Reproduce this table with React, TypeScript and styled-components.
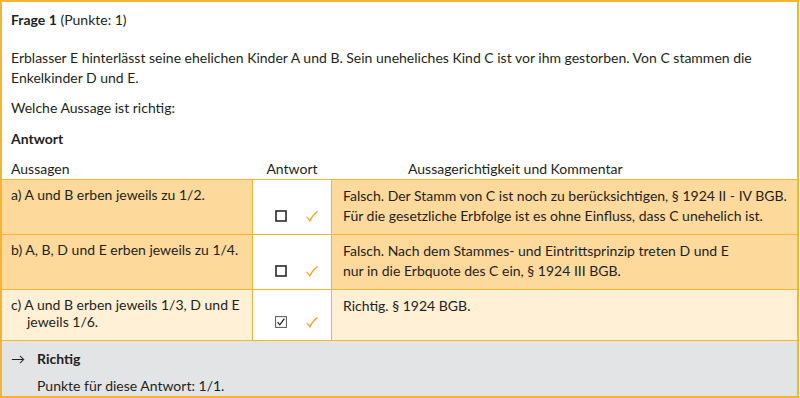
import React from 'react';
import styled, { createGlobalStyle } from 'styled-components';

const GlobalStyle = createGlobalStyle`
    html, body {
        margin: 0;
        padding: 0;
        background: #fff;
    }
    body {
        font-family: Lato, 'Open Sans', 'Liberation Sans', sans-serif;
        color: #231f20;
    }
`;

type Answer = {
    label: string;
    statement: string;
    checked: boolean;
    comment: string[];
    tone: 'strong' | 'light';
};

const answers: Answer[] = [
    {
        label: 'a)',
        statement: 'A und B erben jeweils zu 1/2.',
        checked: false,
        comment: [
            'Falsch. Der Stamm von C ist noch zu berücksichtigen, § 1924 II - IV BGB.',
            'Für die gesetzliche Erbfolge ist es ohne Einfluss, dass C unehelich ist.',
        ],
        tone: 'strong',
    },
    {
        label: 'b)',
        statement: 'A, B, D und E erben jeweils zu 1/4.',
        checked: false,
        comment: [
            'Falsch. Nach dem Stammes- und Eintrittsprinzip treten D und E',
            'nur in die Erbquote des C ein, § 1924 III BGB.',
        ],
        tone: 'strong',
    },
    {
        label: 'c)',
        statement: 'A und B erben jeweils 1/3, D und E jeweils 1/6.',
        checked: true,
        comment: ['Richtig. § 1924 BGB.'],
        tone: 'light',
    },
];

const Box = ({ checked }: { checked: boolean }) =>
    checked ? (
        <svg width="12" height="12" viewBox="0 0 12 12">
            <rect x="0.6" y="0.6" width="10.8" height="10.8" fill="none" stroke="#555" strokeWidth="1" />
            <path d="M2.6 6.2 L4.8 8.8 L9.4 2.6" fill="none" stroke="#222" strokeWidth="1.3" />
        </svg>
    ) : (
        <svg width="12" height="12" viewBox="0 0 12 12">
            <rect x="1" y="1" width="10" height="10" fill="none" stroke="#2a2a2a" strokeWidth="1.6" />
        </svg>
    );

const Tick = () => (
    <svg width="12" height="11" viewBox="0 0 12 11">
        <path d="M1 6.5 Q2.6 7.4 4 9.8 Q6.5 4 11.2 0.8" fill="none" stroke="#f5a623" strokeWidth="1.3" strokeLinecap="round" />
    </svg>
);

const QuestionCard: React.FC = () => (
    <Card>
        <Title>
            <strong>Frage 1</strong> (Punkte: 1)
        </Title>
        <Paragraph>
            Erblasser E hinterlässt seine ehelichen Kinder A und B. Sein uneheliches Kind C ist vor ihm
            gestorben. Von C stammen die Enkelkinder D und E.
        </Paragraph>
        <Question>Welche Aussage ist richtig:</Question>
        <SectionTitle>Antwort</SectionTitle>
        <HeaderRow>
            <HeadCell>Aussagen</HeadCell>
            <HeadCell $center>Antwort</HeadCell>
            <HeadCell $indent={76}>Aussagerichtigkeit und Kommentar</HeadCell>
        </HeaderRow>
        {answers.map((a) => (
            <Row key={a.label} $tone={a.tone}>
                <Statement>
                    {a.label} {a.statement}
                </Statement>
                <ChoiceCell>
                    <Box checked={a.checked} />
                    <Tick />
                </ChoiceCell>
                <Comment>
                    {a.comment.map((line) => (
                        <div key={line}>{line}</div>
                    ))}
                </Comment>
            </Row>
        ))}
        <Result>
            <ResultHead>
                <Arrow>→</Arrow>
                <strong>Richtig</strong>
            </ResultHead>
            <ResultText>Punkte für diese Antwort: 1/1.</ResultText>
        </Result>
    </Card>
);

const Card = styled.div`
    box-sizing: border-box;
    width: 799px;
    height: 398px;
    border: 2px solid #f6b431;
    font-size: 14px;
    display: flex;
    flex-direction: column;
    overflow: hidden;
`;

const Title = styled.div`
    padding: 9px 9px 0;
    line-height: 17px;
    strong {
        font-weight: 700;
    }
`;

const Paragraph = styled.p`
    margin: 20px 0 0;
    padding: 0 9px;
    line-height: 20px;
`;

const Question = styled.p`
    margin: 10px 0 0;
    padding: 0 9px;
    line-height: 20px;
`;

const SectionTitle = styled.div`
    margin-top: 11px;
    padding: 0 9px;
    line-height: 20px;
    font-weight: 700;
`;

const Grid = styled.div`
    display: grid;
    grid-template-columns: 250px 80px 1fr;
`;

const HeaderRow = styled(Grid)`
    margin-top: 10px;
    height: 25px;
    border-bottom: 1px solid #f6b431;
`;

const HeadCell = styled.div<{ $center?: boolean; $indent?: number }>`
    padding-left: ${(p) => (p.$center ? 0 : p.$indent ? `${p.$indent}px` : '9px')};
    text-align: ${(p) => (p.$center ? 'center' : 'left')};
    line-height: 20px;
`;

const Row = styled(Grid)<{ $tone: 'strong' | 'light' }>`
    background: ${(p) => (p.$tone === 'strong' ? '#fdd99c' : '#fff0d6')};
    border-bottom: 1px solid #f6b431;
`;

const Statement = styled.div`
    padding: 6px 0 10px 25px;
    text-indent: -16px;
    line-height: 17px;
`;

const ChoiceCell = styled.div`
    background: #fff;
    border-left: 1px solid #f6b431;
    border-right: 1px solid #f6b431;
    display: flex;
    align-items: flex-end;
    gap: 19px;
    padding: 0 0 12px 22px;
`;

const Comment = styled.div`
    padding: 6px 10px 8px 11px;
    line-height: 20px;
    white-space: nowrap;
`;

const Result = styled.div`
    flex: 1;
    background: #e3e4e6;
    padding: 8px 9px 0;
`;

const ResultHead = styled.div`
    display: flex;
    line-height: 20px;
    strong {
        font-weight: 700;
    }
`;

const Arrow = styled.span`
    width: 26px;
`;

const ResultText = styled.div`
    margin-top: 7px;
    padding-left: 26px;
    line-height: 20px;
`;

export default function App() {
    return (
        <>
            <GlobalStyle />
            <QuestionCard />
        </>
    );
}
